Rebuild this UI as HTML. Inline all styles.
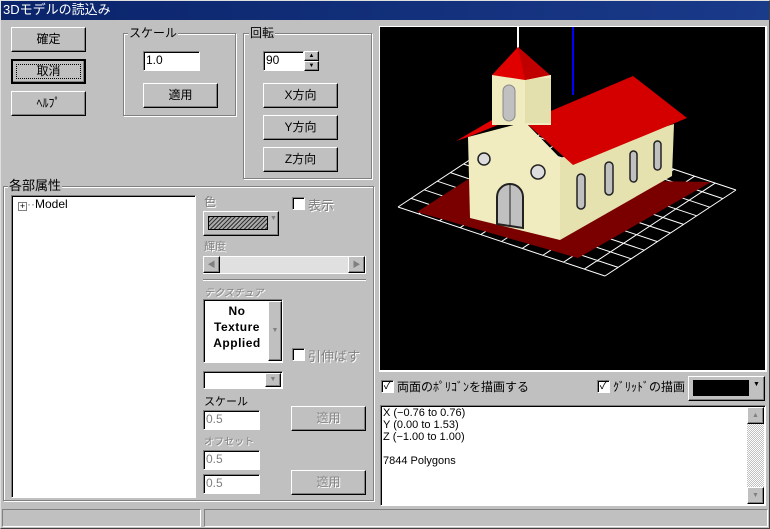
<!DOCTYPE html>
<html><head><meta charset="utf-8"><style>
*{box-sizing:border-box}
body{margin:0;width:770px;height:529px;background:#c0c0c0;font-family:"Liberation Sans","Noto Sans CJK JP",sans-serif;font-size:12px;position:relative;overflow:hidden;color:#000}
.a{position:absolute}
.btn{position:absolute;background:#c0c0c0;border:1px solid;border-color:#fff #000 #000 #fff;box-shadow:inset -1px -1px 0 #808080;text-align:center;font-size:12px}
.grp{position:absolute;border:1px solid #808080;box-shadow:1px 1px 0 #fff, inset 1px 1px 0 #fff}
.lg{position:absolute;background:#c0c0c0;padding:0 1px;font-size:12px;top:-8px;left:6px;line-height:14px}
.inp{position:absolute;background:#fff;border:1px solid;border-color:#808080 #fff #fff #808080;box-shadow:inset 1px 1px 0 #000;padding-left:2px;font-size:12px;line-height:17px}
.dis{color:#808080;text-shadow:1px 1px 0 #fff}
.cb{position:absolute;width:13px;height:13px;background:#fff;border:1px solid;border-color:#808080 #fff #fff #808080;box-shadow:inset 1px 1px 0 #000;font-size:11px;line-height:10px;text-align:center}
</style></head><body>
<div class="a" style="left:0;top:0;width:770px;height:20px;background:linear-gradient(90deg,#0a246a,#1a3a8a);color:#fff;font-size:13px;line-height:20px;padding-left:3px">3Dモデルの読込み</div>
<div class="a" style="left:0;top:0;width:770px;height:529px;border:1px solid;border-color:#dfdfdf #404040 #404040 #dfdfdf;pointer-events:none"></div>

<div class="btn" style="left:11px;top:27px;width:75px;height:25px;line-height:22px">確定</div>
<div class="btn" style="left:11px;top:59px;width:75px;height:25px;line-height:21px;border:2px solid #000;outline:1px dotted #000;outline-offset:-6px">取消</div>
<div class="btn" style="left:11px;top:91px;width:75px;height:25px;line-height:22px">ﾍﾙﾌﾟ</div>

<div class="grp" style="left:123px;top:33px;width:113px;height:83px"><span class="lg" style="left:4px">スケール</span></div>
<div class="inp" style="left:143px;top:51px;width:57px;height:20px">1.0</div>
<div class="btn" style="left:143px;top:83px;width:75px;height:25px;line-height:22px">適用</div>

<div class="grp" style="left:243px;top:33px;width:129px;height:146px"><span class="lg" style="left:5px">回転</span></div>
<div class="inp" style="left:263px;top:51px;width:41px;height:20px">90</div>
<div class="btn" style="left:304px;top:51px;width:15px;height:10px;font-size:6px;line-height:8px">▲</div>
<div class="btn" style="left:304px;top:61px;width:15px;height:10px;font-size:6px;line-height:8px">▼</div>
<div class="btn" style="left:263px;top:83px;width:75px;height:25px;line-height:22px">X方向</div>
<div class="btn" style="left:263px;top:115px;width:75px;height:25px;line-height:22px">Y方向</div>
<div class="btn" style="left:263px;top:147px;width:75px;height:25px;line-height:22px">Z方向</div>

<div class="grp" style="left:3px;top:186px;width:371px;height:315px"><span class="lg" style="left:4px;font-size:13px">各部属性</span></div>
<div class="inp" style="left:11px;top:195px;width:185px;height:303px;line-height:16px;padding-left:6px"><span style="display:inline-block;width:9px;height:9px;border:1px solid #808080;font-size:9px;line-height:7px;text-align:center;vertical-align:-1px">+</span><span style="color:#808080">··</span>Model</div>

<div class="a dis" style="left:204px;top:193px">色</div>
<div class="cb" style="left:292px;top:197px"></div><div class="a dis" style="left:308px;top:195px;font-size:13px">表示</div>
<div class="btn" style="left:203px;top:211px;width:76px;height:25px"><div class="a" style="left:4px;top:4px;width:60px;height:14px;border:1px solid #000;background:repeating-linear-gradient(135deg,#333 0 1px,#aaa 1px 3px)"></div><div class="a" style="left:66px;top:3px;font-size:7px;color:#808080">▼</div></div>
<div class="a dis" style="left:204px;top:238px;font-size:11px">輝度</div>
<div class="a" style="left:203px;top:256px;width:163px;height:18px;background:#e0e0e0;border:1px solid #fff"></div>
<div class="btn" style="left:203px;top:256px;width:17px;height:17px;font-size:8px;line-height:15px;color:#808080">◀</div>
<div class="btn" style="left:348px;top:256px;width:17px;height:17px;font-size:8px;line-height:15px;color:#808080">▶</div>
<div class="a" style="left:203px;top:279px;width:163px;height:2px;border-top:1px solid #808080;border-bottom:1px solid #fff"></div>
<div class="a dis" style="left:204px;top:284px;font-size:10px;font-style:italic">テクスチュア</div>
<div class="a" style="left:203px;top:299px;width:80px;height:64px;background:#fff;border:1px solid;border-color:#808080 #fff #fff #808080;box-shadow:inset 1px 1px 0 #000"></div>
<div class="a" style="left:205px;top:303px;width:64px;text-align:center;font-weight:bold;font-size:12px;line-height:16px;letter-spacing:.5px">No<br>Texture<br>Applied</div>
<div class="btn" style="left:268px;top:301px;width:14px;height:60px;font-size:7px;line-height:58px;color:#808080">▼</div>
<div class="cb" style="left:292px;top:348px"></div><div class="a dis" style="left:308px;top:346px;font-size:13px">引伸ばす</div>
<div class="inp" style="left:203px;top:371px;width:80px;height:18px"></div>
<div class="btn" style="left:265px;top:373px;width:16px;height:14px;font-size:7px;line-height:12px;color:#808080">▼</div>
<div class="a" style="left:204px;top:393px;font-size:11px">スケール</div>
<div class="inp dis" style="left:203px;top:410px;width:57px;height:20px;text-shadow:none">0.5</div>
<div class="btn dis" style="left:291px;top:406px;width:75px;height:25px;line-height:22px">適用</div>
<div class="a dis" style="left:204px;top:433px;font-size:10px">オフセット</div>
<div class="inp dis" style="left:203px;top:450px;width:57px;height:20px;text-shadow:none">0.5</div>
<div class="inp dis" style="left:203px;top:474px;width:57px;height:20px;text-shadow:none">0.5</div>
<div class="btn dis" style="left:291px;top:470px;width:75px;height:25px;line-height:22px">適用</div>

<svg class="a" style="left:379px;top:26px" width="388" height="346" viewBox="379 26 388 346">
<rect x="379" y="26" width="388" height="346" fill="#fff"/>
<rect x="380" y="27" width="385" height="343" fill="#000"/>
<line x1="518" y1="27" x2="518" y2="48" stroke="#fff" stroke-width="2"/>
<line x1="573" y1="27" x2="573" y2="95" stroke="#00f" stroke-width="2"/>
<g transform="matrix(20.7,6.9,13.1,-8.6,398,207)" stroke="#fff" fill="none">
<g vector-effect="non-scaling-stroke" stroke-width="1">
<path vector-effect="non-scaling-stroke" d="M0,0H10M0,1H10M0,2H10M0,3H10M0,4H10M0,5H10M0,6H10M0,7H10M0,8H10M0,9H10M0,10H10M0,0V10M1,0V10M2,0V10M3,0V10M4,0V10M5,0V10M6,0V10M7,0V10M8,0V10M9,0V10M10,0V10"/>
</g></g>
<polygon points="417,212 470,178 711,182 578,258" fill="#7a0000"/>
<polygon points="468,137 525,122 560,158 560,240 470,218" fill="#f0ecc0"/>
<polygon points="560,158 674,124 672,176 560,240" fill="#e6e2b0"/>
<polygon points="525,122 633,76 687,118 573,165" fill="#d40000"/>
<polygon points="456,141 492,120 498,125 468,137" fill="#e00000"/>
<rect x="492" y="75" width="59" height="50" fill="#f0ecc0"/>
<rect x="525" y="78" width="26" height="45" fill="#e4e0ae"/>
<polygon points="518,47 492,75 525,80 550,75" fill="#e00000"/>
<polygon points="518,47 525,80 550,75" fill="#c00000"/>
<rect x="503" y="85" width="12" height="36" rx="6" fill="#c0c0c0" stroke="#888"/>
<path d="M497,224 V197 a13,13 0 0 1 26,0 V228 Z" fill="#c0c0c0" stroke="#222" stroke-width="2"/>
<line x1="510" y1="185" x2="510" y2="226" stroke="#222"/>
<circle cx="484" cy="159" r="6" fill="#ddd" stroke="#222" stroke-width="1.5"/>
<circle cx="538" cy="172" r="7" fill="#ddd" stroke="#222" stroke-width="1.5"/>
<g fill="#c0c0c0" stroke="#222" stroke-width="1.5">
<rect x="577" y="174" width="8" height="35" rx="4"/><rect x="605" y="162" width="8" height="33" rx="4"/>
<rect x="630" y="151" width="7" height="31" rx="3.5"/><rect x="654" y="141" width="7" height="29" rx="3.5"/>
</g>
</svg>

<div class="cb" style="left:381px;top:380px">✓</div><div class="a" style="left:397px;top:378px;font-size:12px">両面のﾎﾟﾘｺﾞﾝを描画する</div>
<div class="cb" style="left:597px;top:380px">✓</div><div class="a" style="left:613px;top:378px;font-size:12px">ｸﾞﾘｯﾄﾞの描画</div>
<div class="btn" style="left:688px;top:376px;width:77px;height:25px"><div class="a" style="left:4px;top:3px;width:56px;height:16px;background:#000"></div><div class="a" style="left:64px;top:4px;font-size:7px">▼</div></div>

<div class="inp" style="left:380px;top:405px;width:386px;height:101px;font-size:11px;line-height:12px;padding-top:1px">X (−0.76 to 0.76)<br>Y (0.00 to 1.53)<br>Z (−1.00 to 1.00)<br><br>7844 Polygons</div>
<div class="a" style="left:747px;top:407px;width:17px;height:97px;background:repeating-conic-gradient(#c0c0c0 0 25%,#fff 0 50%) 0 0/2px 2px"></div>
<div class="btn" style="left:747px;top:407px;width:17px;height:17px;font-size:7px;line-height:15px;color:#808080">▲</div>
<div class="btn" style="left:747px;top:487px;width:17px;height:17px;font-size:7px;line-height:15px;color:#808080">▼</div>

<div class="a" style="left:2px;top:509px;width:199px;height:18px;border:1px solid;border-color:#808080 #fff #fff #808080"></div>
<div class="a" style="left:204px;top:509px;width:564px;height:18px;border:1px solid;border-color:#808080 #fff #fff #808080"></div>
</body></html>
